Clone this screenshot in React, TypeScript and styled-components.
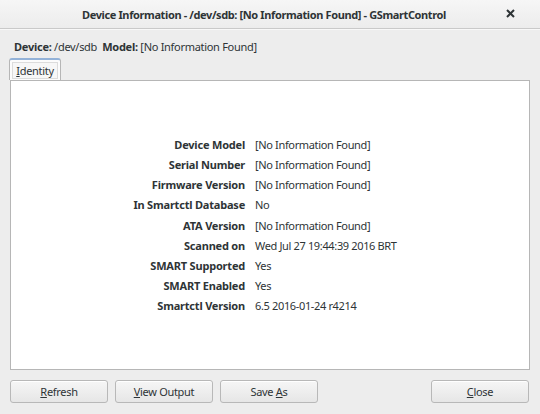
import React from "react";
import styled, { createGlobalStyle } from "styled-components";

const Global = createGlobalStyle`
  html, body { margin: 0; padding: 0; }
  body {
    width: 540px; height: 414px; overflow: hidden;
    background: #ededed;
    font-family: "Noto Sans", "Open Sans", sans-serif;
    color: #2e3436;
    letter-spacing: -0.3px;
  }
`;

const Window = styled.div`
  width: 540px; height: 414px;
  display: flex; flex-direction: column;
  background: #ededed;
`;

const TitleBar = styled.div`
  height: 28px;
  flex: none;
  display: flex; align-items: center; justify-content: center;
  position: relative;
  background: linear-gradient(#f6f6f6, #ececec);
  border-bottom: 1px solid #c9c9c9;
  box-shadow: 0 1px 0 #f8f8f8;
  font-size: 11px; font-weight: 700; color: #2e3436;
  letter-spacing: -0.38px;
  padding-right: 12px;
`;

const CloseX = styled.div`
  position: absolute; right: 25px; top: 9px;
  width: 9px; height: 9px;
  display: flex; align-items: center; justify-content: center;
`;

const Body = styled.div`
  flex: 1;
  display: flex; flex-direction: column;
  padding: 9px 10px 11px 10px;
`;

const InfoLine = styled.div`
  height: 16px; padding-left: 4px;
  display: flex; align-items: center; white-space: pre;
  font-size: 11px;
  margin-bottom: 4px;
`;

const Bold = styled.b`
  font-weight: 700; letter-spacing: -0.25px;
`;

const Tabs = styled.div`
  display: flex; height: 22px; position: relative; z-index: 1;
`;

const Tab = styled.div`
  width: 52px; height: 22px; box-sizing: border-box;
  margin-left: -1px;
  border: 1px solid #b6b6b6; border-bottom: none;
  border-top: 2px solid #93b2d8;
  border-radius: 3px 3px 0 0;
  background: #fcfcfc;
  display: flex; align-items: center; justify-content: center;
  margin-bottom: -1px;
`;

const TabLabel = styled.span`
  font-size: 11px; padding: 0 3px; height: 15px; line-height: 15px;
  border: 1px solid #dcdcdc; background: #f7f7f7;
  u { text-decoration: underline; }
`;

const Panel = styled.div`
  flex: 1;
  background: #fff;
  border: 1px solid #b6b6b6;
  display: flex; align-items: center;
`;

const Grid = styled.div`
  display: grid;
  grid-template-columns: 234px auto;
  column-gap: 10px;
  grid-auto-rows: 20.2px;
  align-items: center;
  font-size: 11px;
`;

const Label = styled.div`
  text-align: right; font-weight: 700; white-space: nowrap;
  letter-spacing: -0.2px;
`;
const Value = styled.div`white-space: nowrap; letter-spacing: -0.35px;`;

const ButtonRow = styled.div`
  display: flex; gap: 7px; margin-top: 10px; height: 23px;
`;

const Btn = styled.button<{ $push?: boolean }>`
  width: 98px; height: 23px;
  margin-left: ${p => (p.$push ? "auto" : "0")};
  margin-right: ${p => (p.$push ? "1px" : "0")};
  font-family: inherit; font-size: 11px; color: #2e3436;
  letter-spacing: -0.3px;
  border: 1px solid #b8b8b8; border-radius: 3px;
  background: linear-gradient(#f6f6f6, #e6e6e6);
  box-shadow: inset 0 1px 0 #fff;
  padding: 0;
  u { text-decoration: underline; }
`;

const rows: [string, string][] = [
  ["Device Model", "[No Information Found]"],
  ["Serial Number", "[No Information Found]"],
  ["Firmware Version", "[No Information Found]"],
  ["In Smartctl Database", "No"],
  ["ATA Version", "[No Information Found]"],
  ["Scanned on", "Wed Jul 27 19:44:39 2016 BRT"],
  ["SMART Supported", "Yes"],
  ["SMART Enabled", "Yes"],
  ["Smartctl Version", "6.5 2016-01-24 r4214"],
];

export default function App() {
  return (
    <Window>
      <Global />
      <TitleBar>
        Device Information - /dev/sdb: [No Information Found] - GSmartControl
        <CloseX>
          <svg width="9" height="9" viewBox="0 0 9 9">
            <path d="M1 1L8 8M8 1L1 8" stroke="#2e3436" strokeWidth="2" />
          </svg>
        </CloseX>
      </TitleBar>
      <Body>
        <InfoLine>
          <Bold>Device:</Bold>{" /dev/sdb  "}<Bold>Model:</Bold>{" [No Information Found]"}
        </InfoLine>
        <Tabs>
          <Tab>
            <TabLabel><u>I</u>dentity</TabLabel>
          </Tab>
        </Tabs>
        <Panel>
          <Grid>
            {rows.map(([l, v]) => (
              <React.Fragment key={l}>
                <Label>{l}</Label>
                <Value>{v}</Value>
              </React.Fragment>
            ))}
          </Grid>
        </Panel>
        <ButtonRow>
          <Btn><u>R</u>efresh</Btn>
          <Btn><u>V</u>iew Output</Btn>
          <Btn>Save <u>A</u>s</Btn>
          <Btn $push><u>C</u>lose</Btn>
        </ButtonRow>
      </Body>
    </Window>
  );
}
